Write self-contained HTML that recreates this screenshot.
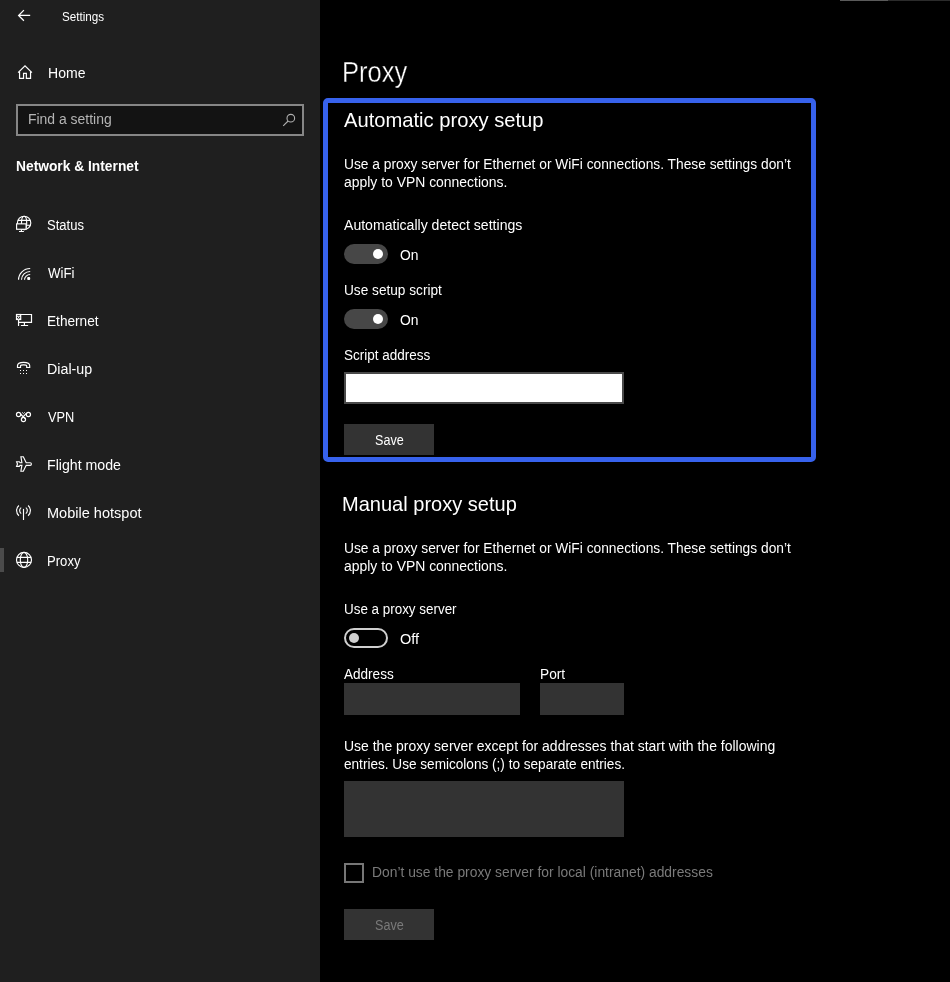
<!DOCTYPE html>
<html lang="en">
<head>
<meta charset="utf-8">
<title>Settings - Proxy</title>
<style>
html,body{margin:0;padding:0;background:#000;}
body{width:950px;height:982px;position:relative;overflow:hidden;font-family:"Liberation Sans",sans-serif;color:#fff;}
.abs,.t,svg.ic{position:absolute;}
.t{white-space:pre;line-height:1;transform-origin:0 50%;font-family:"Liberation Sans",sans-serif;}
#sidebar{left:0;top:0;width:320px;height:982px;background:#1f1f1f;}
#search{left:16px;top:104px;width:284px;height:28px;border:2px solid #868686;background:#131313;}
#sel{left:0;top:548px;width:4px;height:24px;background:#4b4b4b;}
#focus{left:323px;top:98px;width:483px;height:354px;border:5px solid #3762ec;border-radius:5px;}
.tog{width:44px;height:20px;border-radius:10px;box-sizing:border-box;}
.tog.on{background:#474747;}
.tog.on i{position:absolute;left:29px;top:5px;width:10px;height:10px;border-radius:50%;background:#fff;}
.tog.off{border:2px solid #cfcfcf;background:#000;}
.tog.off i{position:absolute;left:3px;top:3px;width:10px;height:10px;border-radius:50%;background:#cfcfcf;}
.field{background:#333;}
.btn{background:#333;width:90px;height:32px;}
svg.ic{overflow:visible;}
</style>
</head>
<body>
<div id="sidebar" class="abs"></div>
<div class="abs" style="left:840px;top:0;width:48px;height:1px;background:#5a5a5a"></div>
<div class="abs" style="left:888px;top:0;width:62px;height:1px;background:#2b2b2b"></div>

<!-- sidebar chrome -->
<div id="search" class="abs"></div>
<div id="sel" class="abs"></div>
<!--ICONS_START-->
<svg class="ic" style="left:0;top:0" width="320" height="982" viewBox="0 0 320 982" fill="none" stroke="#fff" stroke-width="1.15" stroke-linecap="butt" stroke-linejoin="miter">
 <!-- back arrow -->
 <path d="M30.2 15.45H18.6M23.9 10.1L18.6 15.45L23.9 20.8" stroke-width="1.25"/>
 <!-- home -->
 <path d="M18.1 72.6L25 65.9L31.9 72.6" stroke-width="1.25"/>
 <path d="M19.55 71.6V78.45H23.55V73.45H26.35V78.45H30.55V71.6" stroke-width="1.2"/>
 <!-- search magnifier -->
 <g stroke="#b0b0b0" stroke-width="1.1"><circle cx="290.8" cy="118.2" r="3.8"/><path d="M288.1 121L283.2 125.9"/></g>
 <!-- status: globe + monitor -->
 <g stroke-width="1.15">
  <circle cx="24.1" cy="222.9" r="6.7"/>
  <ellipse cx="24.1" cy="222.9" rx="2.6" ry="6.7"/>
  <path d="M18 220.3H30.2M26 225.2H30.4"/>
  <rect x="16.6" y="223.85" width="9.5" height="5.4" fill="#1f1f1f" stroke-width="1.15"/>
  <path d="M21.4 229.6V231.4M19 231.45H23.9" stroke-width="1.1"/>
 </g>
 <!-- wifi -->
 <g stroke-width="1.15">
  <path d="M18.55 279.8A11.65 11.3 0 0 1 30.2 268.5"/>
  <path d="M21.5 279.8A8.7 8.3 0 0 1 30.2 271.5"/>
  <path d="M24.5 279.8A5.7 5.3 0 0 1 30.2 274.5"/>
  <rect x="27.2" y="277" width="3" height="2.9" rx="1" fill="#fff" stroke="none"/>
 </g>
 <!-- ethernet -->
 <g stroke-width="1.2">
  <path d="M20.8 314.5H31.5V322.3H18.55"/>
  <rect x="16.5" y="314.5" width="4.2" height="5" fill="#e8e8e8"/>
  <path d="M17.3 315.7H19.8M17.5 317V318Q18.55 319.3 19.6 318V317" stroke="#1f1f1f" stroke-width="0.95"/>
  <path d="M18.55 320V326M24.4 322.9V325.5M20.9 325.5H28.1"/>
 </g>
 <!-- dial-up -->
 <path d="M17.5 367.5V365.7C17.5 363.3 20 362.4 23.6 362.4C27.2 362.4 29.7 363.3 29.7 365.7V367.5H26.7V366Q26.7 365.2 25.9 365.1Q23.6 364.8 21.3 365.1Q20.5 365.2 20.5 366V367.5Z" stroke-width="1.2"/>
 <g fill="#fff" stroke="none">
  <rect x="20" y="370" width="1" height="1"/><rect x="23" y="370" width="1" height="1"/><rect x="26" y="370" width="1" height="1"/>
  <rect x="20" y="373" width="1" height="1"/><rect x="23" y="373" width="1" height="1"/><rect x="26" y="373" width="1" height="1"/>
 </g>
 <!-- vpn -->
 <g stroke-width="1.2">
  <circle cx="18.55" cy="414.45" r="2.1"/><circle cx="28.4" cy="414.45" r="2.1"/><circle cx="23.45" cy="419.5" r="2.1"/>
  <path d="M20.6 414L22.6 416.2Q24.6 417.4 25.4 419M26.6 413.2L22 417.8"/>
  <path d="M22.1 412.3L23.45 413.6L24.8 412.3" stroke-width="0.95" stroke="#e8e8e8"/>
 </g>
 <!-- flight mode -->
 <path d="M16.6 461.7H19.3L20.1 462.7H21.9L20.9 456.7H23.3L26.2 462.7H30.2Q31.4 462.7 31.4 464Q31.4 465.3 30.2 465.3H26.2L23.3 471.2H20.9L21.9 465.3H20.1L19.3 466.3H16.6L17.5 464Z" stroke-width="1.15"/>
 <!-- mobile hotspot -->
 <g stroke-width="1.15">
  <path d="M23.5 508.9V520"/>
  <path d="M18.9 505.5A6.8 6.8 0 0 0 18.9 515.7M28.1 505.5A6.8 6.8 0 0 1 28.1 515.7"/>
  <path d="M21.2 507.6A3.7 3.7 0 0 0 21.2 513.6M25.8 507.6A3.7 3.7 0 0 1 25.8 513.6"/>
 </g>
 <!-- proxy globe -->
 <g stroke-width="1.15">
  <circle cx="24" cy="559.9" r="7.5"/>
  <ellipse cx="24" cy="559.9" rx="3.7" ry="7.5"/>
  <path d="M16.9 557.4H31.1M16.9 562.35H31.1"/>
 </g>
</svg>
<!--ICONS_END-->

<!-- main: focus rectangle -->
<div id="focus" class="abs"></div>

<!-- automatic proxy controls -->
<div class="abs tog on" style="left:344px;top:244px"><i></i></div>
<div class="abs tog on" style="left:344px;top:309px"><i></i></div>
<div class="abs" style="left:344px;top:372px;width:276px;height:28px;border:2px solid #4a4a4a;background:#fff"></div>
<div class="abs btn" style="left:344px;top:424px;height:31px"></div>

<!-- manual proxy controls -->
<div class="abs tog off" style="left:344px;top:628px"><i></i></div>
<div class="abs field" style="left:344px;top:683px;width:176px;height:32px"></div>
<div class="abs field" style="left:540px;top:683px;width:84px;height:32px"></div>
<div class="abs field" style="left:344px;top:781px;width:280px;height:56px"></div>
<div class="abs" style="left:344px;top:863px;width:16px;height:16px;border:2px solid #767676"></div>
<div class="abs btn" style="left:344px;top:909px;height:31px"></div>

<div id="txt" class="abs" style="left:0;top:0;width:950px;height:982px;will-change:transform">
<span class="t" style="left:62.22px;top:11.00px;font-size:12px;color:#ffffff;transform:scaleX(0.9721);">Settings</span>
<span class="t" style="left:47.80px;top:66.80px;font-size:13.8px;color:#ffffff;transform:scaleX(1.0180);">Home</span>
<span class="t" style="left:27.91px;top:112.90px;font-size:13.8px;color:#b4b4b4;transform:scaleX(1.0096);">Find a setting</span>
<span class="t" style="left:16.03px;top:160.20px;font-size:13.8px;color:#ffffff;font-weight:700;transform:scaleX(0.9995);">Network &amp; Internet</span>
<span class="t" style="left:47.36px;top:218.70px;font-size:13.8px;color:#ffffff;transform:scaleX(0.9447);">Status</span>
<span class="t" style="left:48.39px;top:266.70px;font-size:13.8px;color:#ffffff;transform:scaleX(0.9585);">WiFi</span>
<span class="t" style="left:46.93px;top:314.70px;font-size:13.8px;color:#ffffff;transform:scaleX(0.9878);">Ethernet</span>
<span class="t" style="left:46.88px;top:362.70px;font-size:13.8px;color:#ffffff;transform:scaleX(1.0332);">Dial-up</span>
<span class="t" style="left:48.39px;top:410.70px;font-size:13.8px;color:#ffffff;transform:scaleX(0.9268);">VPN</span>
<span class="t" style="left:46.89px;top:458.70px;font-size:13.8px;color:#ffffff;transform:scaleX(1.0263);">Flight mode</span>
<span class="t" style="left:46.86px;top:506.70px;font-size:13.8px;color:#ffffff;transform:scaleX(1.0531);">Mobile hotspot</span>
<span class="t" style="left:46.98px;top:554.70px;font-size:13.8px;color:#ffffff;transform:scaleX(0.9495);">Proxy</span>
<span class="t" style="left:341.86px;top:57.90px;font-size:29px;color:#ffffff;transform:scaleX(0.8800);-webkit-text-stroke:0.38px #000;">Proxy</span>
<span class="t" style="left:344.01px;top:109.80px;font-size:20.2px;color:#ffffff;transform:scaleX(0.9990);">Automatic proxy setup</span>
<span class="t" style="left:343.89px;top:158.20px;font-size:13.8px;color:#ffffff;transform:scaleX(0.9984);">Use a proxy server for Ethernet or WiFi connections. These settings don’t</span>
<span class="t" style="left:344.36px;top:175.90px;font-size:13.8px;color:#ffffff;transform:scaleX(1.0095);">apply to VPN connections.</span>
<span class="t" style="left:344.22px;top:219.00px;font-size:13.8px;color:#ffffff;transform:scaleX(1.0199);">Automatically detect settings</span>
<span class="t" style="left:400.09px;top:248.90px;font-size:13.8px;color:#ffffff;transform:scaleX(1.0026);">On</span>
<span class="t" style="left:343.90px;top:283.60px;font-size:13.8px;color:#ffffff;transform:scaleX(0.9892);">Use setup script</span>
<span class="t" style="left:400.09px;top:313.90px;font-size:13.8px;color:#ffffff;transform:scaleX(1.0026);">On</span>
<span class="t" style="left:344.34px;top:348.60px;font-size:13.8px;color:#ffffff;transform:scaleX(0.9775);">Script address</span>
<span class="t" style="left:374.98px;top:433.80px;font-size:13.8px;color:#ffffff;transform:scaleX(0.9135);">Save</span>
<span class="t" style="left:342.06px;top:493.60px;font-size:20.2px;color:#ffffff;transform:scaleX(0.9920);">Manual proxy setup</span>
<span class="t" style="left:343.89px;top:542.30px;font-size:13.8px;color:#ffffff;transform:scaleX(0.9984);">Use a proxy server for Ethernet or WiFi connections. These settings don’t</span>
<span class="t" style="left:344.36px;top:560.00px;font-size:13.8px;color:#ffffff;transform:scaleX(1.0095);">apply to VPN connections.</span>
<span class="t" style="left:343.91px;top:603.20px;font-size:13.8px;color:#ffffff;transform:scaleX(0.9722);">Use a proxy server</span>
<span class="t" style="left:400.16px;top:633.20px;font-size:13.8px;color:#ffffff;transform:scaleX(1.0501);">Off</span>
<span class="t" style="left:343.87px;top:668.00px;font-size:13.8px;color:#ffffff;transform:scaleX(0.9820);">Address</span>
<span class="t" style="left:539.53px;top:668.00px;font-size:13.8px;color:#ffffff;transform:scaleX(0.9925);">Port</span>
<span class="t" style="left:343.87px;top:740.00px;font-size:13.8px;color:#ffffff;transform:scaleX(1.0131);">Use the proxy server except for addresses that start with the following</span>
<span class="t" style="left:344.37px;top:758.00px;font-size:13.8px;color:#ffffff;transform:scaleX(0.9851);">entries. Use semicolons (;) to separate entries.</span>
<span class="t" style="left:371.71px;top:866.00px;font-size:13.8px;color:#7a7a7a;transform:scaleX(1.0033);">Don’t use the proxy server for local (intranet) addresses</span>
<span class="t" style="left:374.98px;top:918.80px;font-size:13.8px;color:#7a7a7a;transform:scaleX(0.9135);">Save</span>
</div>
</body>
</html>
